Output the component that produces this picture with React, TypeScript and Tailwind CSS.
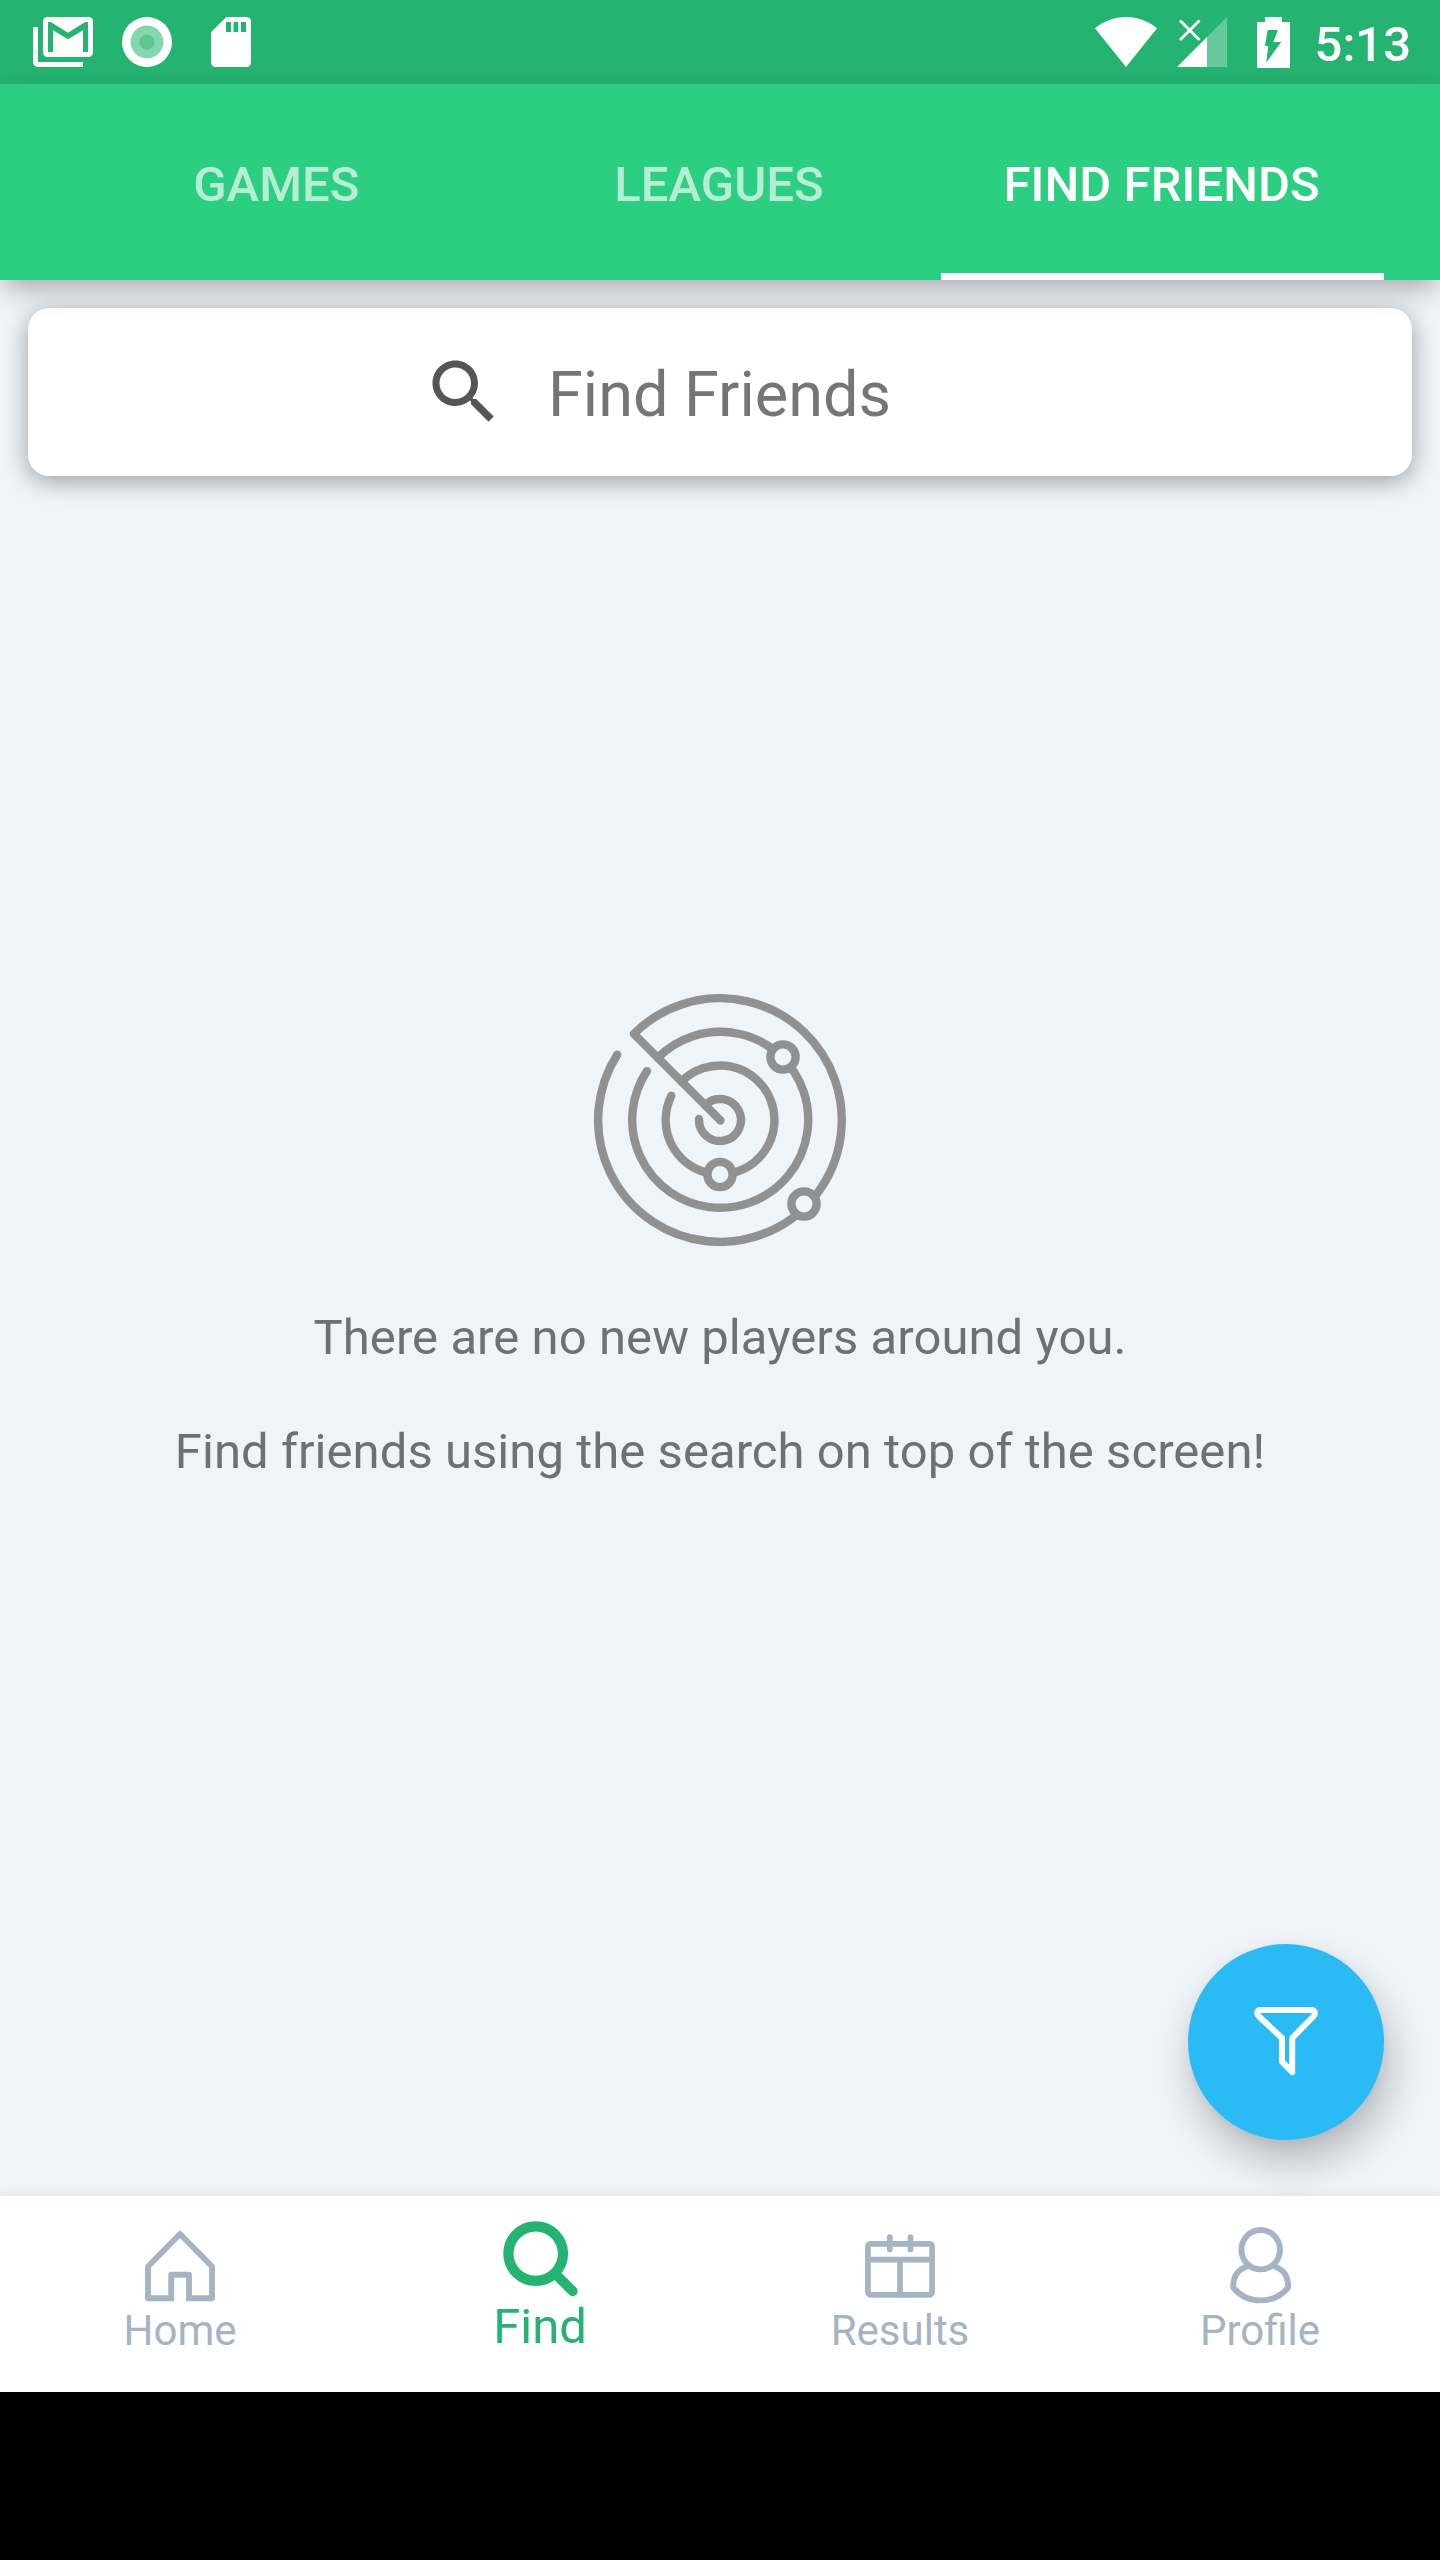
import type { ReactNode } from "react";

function GmailIcon() {
  return (
    <svg width="60" height="50" viewBox="33 17 60 50" fill="#fff">
      <path d="M33 27h5v35h45v5H38a5 5 0 0 1-5-5z" />
      <rect x="43" y="17" width="50" height="40" rx="4.5" />
      <path d="M48 52V22h2.8L68 32.7 85.2 22H88v30h-5V30.2l-15 9.1-15-9.1V52z" fill="#24b371" />
    </svg>
  );
}

function RecordIcon() {
  return (
    <svg width="50" height="50" viewBox="0 0 50 50">
      <circle cx="25" cy="25" r="25" fill="#fff" />
      <circle cx="25" cy="25" r="16.4" fill="#83d6af" />
      <circle cx="25" cy="25" r="7.6" fill="#5cc793" />
    </svg>
  );
}

function SdCardIcon() {
  return (
    <svg width="40" height="50" viewBox="211 17 40 50">
      <path d="M226.4 17H246.5a4.5 4.5 0 0 1 4.5 4.5V62.5a4.5 4.5 0 0 1-4.5 4.5H215.5a4.5 4.5 0 0 1-4.5-4.5V32.2z" fill="#fff" />
      <path d="M226 22h5v10h-5zM233.5 22h4.7v10h-4.7zM241 22h5v10h-5z" fill="#24b371" />
    </svg>
  );
}

function WifiIcon() {
  return (
    <svg width="62" height="50" viewBox="1095 17 62 50" fill="#fff">
      <path d="M1126 67 1095 28.2C1103.5 21.5 1114 17 1126 17s22.5 4.5 31 11.2z" />
    </svg>
  );
}

function SignalIcon() {
  return (
    <svg width="50" height="50" viewBox="1177 17 50 50">
      <path d="M1207 37 1227 17V67H1207z" fill="#fff" fillOpacity="0.3" />
      <path d="M1177 67 1207 37V67z" fill="#fff" />
      <path d="M1180 20.5 1199.5 40M1199.5 20.5 1180 40" stroke="#fff" strokeWidth="2.8" />
    </svg>
  );
}

function BatteryIcon() {
  return (
    <svg width="33" height="51" viewBox="1257 16 33 51">
      <path d="M1265 16h17v5h8v46h-33V21h8z" fill="#fff" />
      <path d="M1267.7 29h10.3l-4.7 12h8l-15 20.5 2-16.5h-3.3z" fill="#24b371" />
    </svg>
  );
}

function SearchIcon() {
  return (
    <svg width="84" height="84" viewBox="0 0 24 24" fill="#555">
      <path d="M15.5 14h-.79l-.28-.27C15.41 12.59 16 11.11 16 9.5 16 5.91 13.09 3 9.5 3S3 5.91 3 9.5 5.91 16 9.5 16c1.61 0 3.09-.59 4.23-1.57l.27.28v.79l5 4.99L20.49 19l-4.99-5zm-6 0C7.01 14 5 11.99 5 9.5S7.01 5 9.5 5 14 7.01 14 9.5 11.99 14 9.5 14z" />
    </svg>
  );
}

function RadarIcon() {
  return (
    <svg width="252" height="252" viewBox="0 0 252 252" fill="none" stroke="#919191" strokeWidth="8.4" strokeLinecap="round" strokeLinejoin="round">
      <path d="M126.5 126.5 39.87 39.87A121.8 121.8 0 1 1 23.16 60.7" />
      <path d="M63.77 63.77A88 88 0 1 1 52.9 77.1" />
      <path d="M87.53 87.53A54.4 54.4 0 1 1 77.3 101.8" />
      <path d="M111.15 111.15A21 21 0 1 1 105.02 125" />
      <g fill="#eff4f9">
        <circle cx="189" cy="63" r="12.6" />
        <circle cx="126" cy="180.5" r="12.6" />
        <circle cx="210" cy="210" r="12.6" />
      </g>
    </svg>
  );
}

function FilterIcon() {
  return (
    <svg width="84" height="84" viewBox="56 56 84 84" fill="none" stroke="#fff" strokeWidth="6" strokeLinejoin="round">
      <path d="M72.5 66H123.5C127 66 127.700 70 125.5 72.3L104.2 94V128.2L94 117.7V94L71 72.5C68 69.5 69 66 72.5 66z" />
    </svg>
  );
}

function HomeIcon() {
  return (
    <svg width="84" height="84" viewBox="0 0 84 84" fill="none" stroke="#a5b4c5" strokeWidth="5.9" strokeLinejoin="round">
      <path d="M36.1 74.2H10V42.5L42 10 74 42.5V74.2H47.9" />
      <path d="M33.2 77.1V50.7H51V77.1" />
    </svg>
  );
}

function FindIcon() {
  return (
    <svg width="84" height="84" viewBox="0 0 84 84" fill="none" stroke="#24b371" strokeLinecap="round">
      <circle cx="37.7" cy="37.6" r="27.3" strokeWidth="10.2" />
      <path d="M58 58.5 74.7 75.2" strokeWidth="10" />
    </svg>
  );
}

function ResultsIcon() {
  return (
    <svg width="84" height="84" viewBox="0 0 84 84" fill="none" stroke="#a5b4c5" strokeWidth="5.7">
      <rect x="9.9" y="19.9" width="64.2" height="50.9" rx="2.5" />
      <path d="M10 35.7H74M42 35.7V70" />
      <path d="M31.8 13.2V25.4M52.5 13.2V25.4" strokeLinecap="round" />
    </svg>
  );
}

function ProfileIcon() {
  return (
    <svg width="84" height="84" viewBox="0 0 84 84" fill="none" stroke="#a5b4c5" strokeWidth="5.9" strokeLinejoin="round">
      <ellipse cx="42.7" cy="25.7" rx="19.3" ry="19.7" />
      <path d="M31 41.5C20 45.5 15.2 51 15.2 63.5A35.8 35.8 0 0 0 70.2 63.5C70.2 51 65.4 45.5 54.4 41.5" />
    </svg>
  );
}

function Tab({ label, active = false }: { label: string; active?: boolean }) {
  return (
    <div
      className={
        active
          ? "flex flex-1 items-center justify-center border-y-[7px] border-t-transparent border-b-white text-white"
          : "flex flex-1 items-center justify-center border-y-[7px] border-transparent text-white/65"
      }
    >
      <span className="relative top-[2px] right-px text-[49px] leading-none font-medium tracking-[0.06px] whitespace-nowrap">{label}</span>
    </div>
  );
}

function NavItem({ label, icon }: { label: string; icon: ReactNode }) {
  return (
    <div className="flex flex-1 flex-col items-center pt-7 text-[42px] leading-[49px] text-[#a5b4c5]">
      {icon}
      <span className="-mt-[2px]">{label}</span>
    </div>
  );
}

export default function App() {
  return (
    <div className="flex h-[2560px] w-[1440px] flex-col overflow-hidden bg-black font-[Roboto,sans-serif]">
      <header className="relative z-10">
        <div className="flex h-[84px] items-center justify-between bg-[#24b371] pr-[29px] pl-[33px]">
          <div className="flex items-center">
            <GmailIcon />
            <div className="ml-[29px]"><RecordIcon /></div>
            <div className="ml-[39px]"><SdCardIcon /></div>
          </div>
          <div className="flex items-center">
            <WifiIcon />
            <div className="ml-5"><SignalIcon /></div>
            <div className="ml-[30px]"><BatteryIcon /></div>
            <span className="relative top-[2px] ml-[25px] text-[49px] leading-none font-medium text-white">5:13</span>
          </div>
        </div>
        <nav className="flex h-[196px] bg-[#2cce82] px-14 shadow-[0_12px_26px_-4px_rgba(0,0,0,0.31)]">
          <Tab label="GAMES" />
          <Tab label="LEAGUES" />
          <Tab label="FIND FRIENDS" active />
        </nav>
      </header>

      <main className="relative flex h-[1916px] flex-col items-center bg-[#eff4f9] pt-7">
        <div className="flex h-[168px] w-[1384px] items-center rounded-[21px] bg-white pl-[394px] shadow-[0_5px_24px_0_rgba(0,0,0,0.36)]">
          <SearchIcon />
          <span className="relative top-[2px] ml-[42px] text-[63px] leading-none text-[#757575]">Find Friends</span>
        </div>
        <div className="mt-[518px]"><RadarIcon /></div>
        <p className="mt-[63px] text-[49px] leading-[58px] tracking-[0.07px] text-[#6e7072]">There are no new players around you.</p>
        <p className="mt-14 text-[49px] leading-[58px] tracking-[0.05px] text-[#6e7072]">Find friends using the search on top of the screen!</p>
        <button className="absolute right-14 bottom-14 flex size-[196px] items-center justify-center rounded-full bg-[#2abbf5] shadow-[6px_22px_40px_0_rgba(0,0,0,0.24),0_4px_12px_0_rgba(0,0,0,0.05)]">
          <FilterIcon />
        </button>
      </main>

      <footer className="relative flex h-[196px] bg-white shadow-[0_0_14px_0_rgba(0,0,0,0.08)]">
        <NavItem label="Home" icon={<HomeIcon />} />
        <div className="flex flex-1 flex-col items-center pt-5 text-[49px] leading-[57px] text-[#24b371]">
          <FindIcon />
          <span className="-mt-[2px]">Find</span>
        </div>
        <NavItem label="Results" icon={<ResultsIcon />} />
        <NavItem label="Profile" icon={<ProfileIcon />} />
      </footer>
    </div>
  );
}
